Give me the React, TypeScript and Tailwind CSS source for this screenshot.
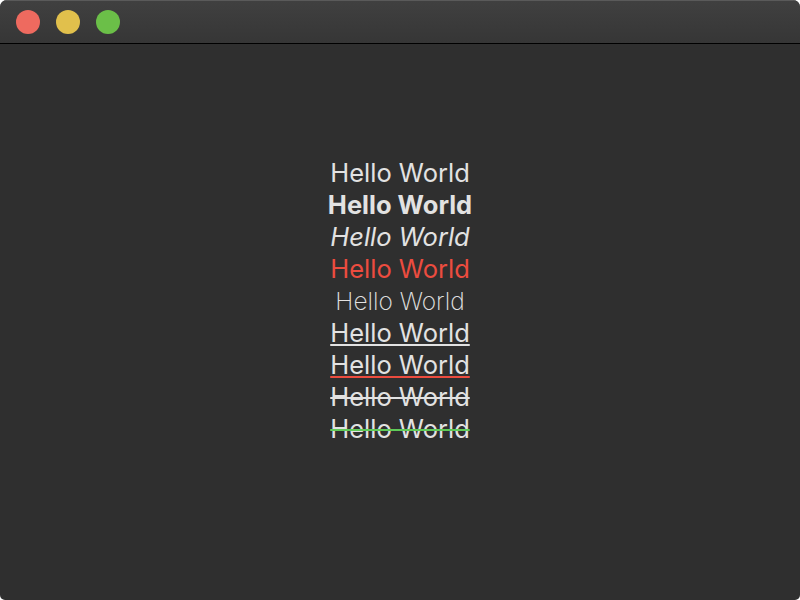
export default function App() {
  const base = "h-8 leading-8 text-[25.5px] text-[#e2e2e2]";
  return (
    <div className="w-[800px] h-[600px] bg-white">
      <div className="w-full h-full rounded-t-[7px] rounded-b-[5px] overflow-hidden bg-[#2f2f2f] flex flex-col" style={{ fontFamily: "Inter, 'Noto Sans', sans-serif" }}>
        <div className="h-[44px] shrink-0 bg-gradient-to-b from-[#404040] to-[#363636] border-b border-black flex items-center pl-4 gap-4 border-t border-t-[#5a5a5a]">
          <div className="w-6 h-6 rounded-full bg-[#ee6a5f]" />
          <div className="w-6 h-6 rounded-full bg-[#e1c04c]" />
          <div className="w-6 h-6 rounded-full bg-[#6bbf48]" />
        </div>
        <div className="flex-1 flex flex-col items-center pt-[113px]">
          <div className={base}>Hello World</div>
          <div className={`${base} font-bold`}>Hello World</div>
          <div className={`${base} italic`}>Hello World</div>
          <div className={`${base} !text-[#ec4c3f]`}>Hello World</div>
          <div className="h-8 leading-8 text-[24.5px] text-[#e2e2e2] font-extralight">Hello World</div>
          <div className={`${base} underline decoration-2 underline-offset-[2px]`}>Hello World</div>
          <div className={`${base} underline decoration-2 underline-offset-[2px] decoration-[#ec4c3f]`}>Hello World</div>
          <div className={`${base} line-through decoration-2`}>Hello World</div>
          <div className={`${base} line-through decoration-2 decoration-[#5fcb58]`}>Hello World</div>
        </div>
      </div>
    </div>
  );
}
